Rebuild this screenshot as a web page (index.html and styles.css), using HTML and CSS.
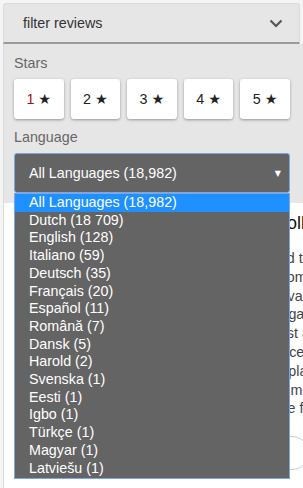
FILE: index.html
```html
<!DOCTYPE html>
<html lang="en">
<head>
    <meta charset="UTF-8">
    <meta name="viewport" content="width=device-width, initial-scale=1.0">
    <title>filter reviews</title>
    <link rel="stylesheet" href="styles.css">
</head>
<body>
    <div class="wrap">
        <!-- 头部 -->
        <div class="filterHead">
            <span>filter reviews</span>
            <svg class="chev" width="14" height="9" viewBox="0 0 14 9">
                <path d="M1.5 1.5 L7 7 L12.5 1.5" fill="none" stroke="#555" stroke-width="2.2"/>
            </svg>
        </div>

        <div class="filterBody">
            <div class="lbl">Stars</div>
            <div class="stars">
                <button class="star"><span class="one">1</span> ★</button>
                <button class="star">2 ★</button>
                <button class="star">3 ★</button>
                <button class="star">4 ★</button>
                <button class="star">5 ★</button>
            </div>
            <div class="lbl lang">Language</div>
            <div class="select">
                <span>All Languages (18,982)</span>
                <span class="arrow">▼</span>
            </div>
        </div>

        <!-- 下面的评论 -->
        <div class="content">
            <h3>Recent reviews from our guests, collected here</h3>
            <p>Read what travellers tell about our <span class="org">hotel</span> and the area around it</p>
            <p>find out what the rooms are like, the view from the windows</p>
            <p>from the terrace and the breakfast details available daily</p>
            <p>before you book. Everything in this page is gathered by us</p>
            <p>was written by guests who stayed in the past and shared it</p>
            <p>year and had a real stay at the place in the centre of town</p>
            <p>summer or winter season and wanted to explain every detail</p>
            <p>what they liked and what the rooms or staff members offered</p>
            <p>should improve for the next visit in the future for all guests</p>
            <div class="more"><span class="circle"></span></div>
        </div>
    </div>

    <!-- 下拉列表 -->
    <ul class="dropList">
        <li class="on">All Languages (18,982)</li>
        <li>Dutch (18 709)</li>
        <li>English (128)</li>
        <li>Italiano (59)</li>
        <li>Deutsch (35)</li>
        <li>Français (20)</li>
        <li>Español (11)</li>
        <li>Română (7)</li>
        <li>Dansk (5)</li>
        <li>Harold (2)</li>
        <li>Svenska (1)</li>
        <li>Eesti (1)</li>
        <li>Igbo (1)</li>
        <li>Türkçe (1)</li>
        <li>Magyar (1)</li>
        <li>Latviešu (1)</li>
    </ul>
</body>
</html>
```

FILE: styles.css
```css
*{
    margin: 0;
    padding: 0;
    box-sizing: border-box;
}
body{
    background: #f5f5f5;
    font-family: "Liberation Sans", Arial, sans-serif;
    font-size: 14.3px;
    color: #333;
    height: 100vh;
    overflow: hidden;
}
.wrap{
    padding: 3px 0 0 3px;
}
.filterHead{
    height: 41px;
    width: 297px;
    background: #e6e6e6;
    border: 1px solid #dadada;
    border-bottom: 2px solid #9a9a9a;
    border-radius: 3px 3px 0 0;
    display: flex;
    align-items: center;
    justify-content: space-between;
    padding: 0 16px 0 19px;
    color: #333;
}
.chev{
    display: block;
}
.filterBody{
    background: #e6e6e6;
    border-left: 1px solid #dadada;
    padding: 11px 10px 10px 10px;
}
.lbl{
    color: #666;
    line-height: 17px;
    margin-bottom: 7px;
}
.lang{
    margin-top: 10px;
}
.stars{
    display: flex;
    gap: 7px;
}
.star{
    width: 49.6px;
    height: 40px;
    background: #fff;
    border: none;
    border-radius: 3px;
    box-shadow: 0 1px 3px rgba(0,0,0,.35);
    font-family: "Liberation Sans", "DejaVu Sans", sans-serif;
    font-size: 14.3px;
    color: #222;
}
.one{
    color: #a01010;
}
.select{
    width: 276px;
    height: 40px;
    background: #646464;
    border: 1px solid #7ea6e0;
    border-radius: 3px;
    display: flex;
    align-items: center;
    justify-content: space-between;
    padding: 0 8px 0 14px;
    color: #fff;
}
.arrow{
    font-size: 8px;
    font-family: "DejaVu Sans", sans-serif;
}
.content{
    background: #fff;
    border-left: 1px solid #dadada;
    padding: 8px 0 0 11px;
    height: 300px;
    white-space: nowrap;
    overflow: hidden;
}
.content h3{
    font-size: 18px;
    font-weight: normal;
    color: #111;
    line-height: 24px;
    margin-bottom: 14px;
}
.content p{
    color: #444;
    line-height: 18.8px;
}
.org{
    color: #e8902a;
}
.more{
    margin-top: 18px;
    padding-left: 250px;
}
.circle{
    display: inline-block;
    width: 44px;
    height: 34px;
    border: 1px solid #ccc;
    border-radius: 17px;
}
.dropList{
    position: absolute;
    left: 14px;
    top: 193px;
    width: 276px;
    background: #646464;
    border: 1px solid #7ea6e0;
    list-style: none;
    color: #fff;
    padding-bottom: 1px;
}
.dropList li{
    line-height: 17.7px;
    padding-left: 14px;
}
.dropList li.on{
    background: #1e90ff;
}
```
